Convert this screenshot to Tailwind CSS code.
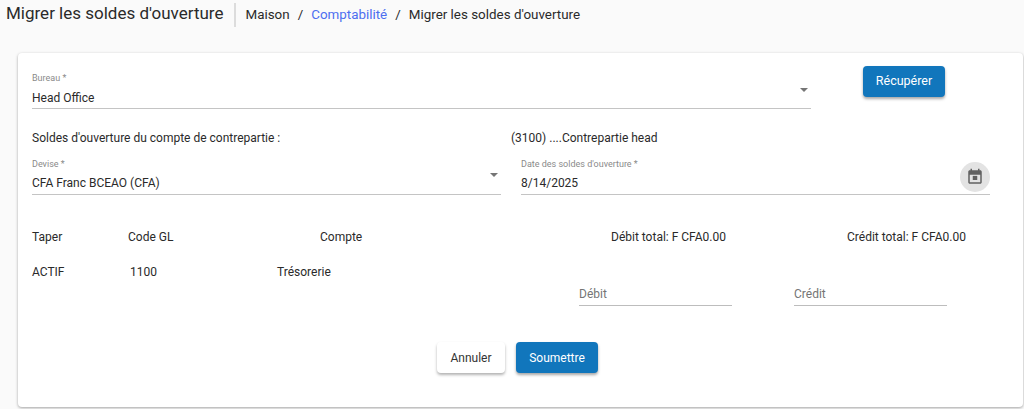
<!DOCTYPE html>
<html lang="fr">
<head>
<meta charset="utf-8">
<title>Migrer les soldes d'ouverture</title>
<script src="https://cdn.jsdelivr.net/npm/@tailwindcss/browser@4"></script>
</head>
<body class="bg-[#fafafa] font-['Roboto',sans-serif] text-[#2a2a2a] overflow-hidden">
<div class="h-[409px] w-[1024px] flex flex-col">
  <!-- header -->
  <div class="flex items-center h-[24px] mt-[3px] pl-[6px]">
    <h1 class="text-[17px] leading-[24px] font-normal mb-[4px]">Migrer les soldes d'ouverture</h1>
    <div class="w-[2px] h-[24px] bg-[#dcdcdc] ml-[11px] mr-[9px]"></div>
    <div class="flex items-center text-[13.4px] leading-[24px] gap-[8px]">
      <span>Maison</span><span>/</span><span class="text-[#4d6ef0]">Comptabilité</span><span>/</span><span>Migrer les soldes d'ouverture</span>
    </div>
  </div>

  <!-- card -->
  <div class="ml-[18px] mr-[1px] mt-[26px] h-[354px] bg-white rounded shadow-[0_1px_3px_rgba(0,0,0,0.35)] pl-[14px] relative">
    <div class="flex items-start">
      <div class="w-[779px] mt-[20px] border-b border-[#c4c4c4] h-[36px] relative">
        <div class="text-[9px] leading-[11px] text-[#8a8a8a]">Bureau *</div>
        <div class="text-[12px] leading-[16px] mt-[6px]">Head Office</div>
        <span class="absolute right-[3px] top-[15px] w-0 h-0 border-x-[4px] border-x-transparent border-t-[4px] border-t-[#757575]"></span>
      </div>
      <button class="ml-[52px] mt-[13px] w-[82px] h-[31px] rounded bg-[#1176bc] text-white text-[12.5px] shadow-[0_2px_3px_rgba(0,0,0,0.35)]">Récupérer</button>
    </div>

    <div class="flex mt-[22px] text-[12px] leading-[15px]">
      <div class="w-[479px]">Soldes d'ouverture du compte de contrepartie :</div>
      <div>(3100) ....Contrepartie head</div>
    </div>

    <div class="flex gap-[20px] mt-[13px]">
      <div class="w-[469px] h-[36px] border-b border-[#c4c4c4] relative">
        <div class="text-[9px] leading-[11px] text-[#8a8a8a]">Devise *</div>
        <div class="text-[12px] leading-[16px] mt-[5px]">CFA Franc BCEAO (CFA)</div>
        <span class="absolute right-[3px] top-[14px] w-0 h-0 border-x-[4px] border-x-transparent border-t-[4px] border-t-[#757575]"></span>
      </div>
      <div class="w-[469px] h-[36px] border-b border-[#c4c4c4] relative">
        <div class="text-[9px] leading-[11px] text-[#8a8a8a]">Date des soldes d'ouverture *</div>
        <div class="text-[12px] leading-[16px] mt-[5px]">8/14/2025</div>
        <span class="absolute right-0 top-[3px] w-[30px] h-[30px] rounded-full bg-[#e3e3e3] flex items-center justify-center">
          <svg class="w-[18px] h-[18px]" viewBox="0 0 24 24" fill="#616161"><path d="M19 3h-1V1h-2v2H8V1H6v2H5c-1.1 0-2 .9-2 2v14c0 1.1.9 2 2 2h14c1.1 0 2-.9 2-2V5c0-1.1-.9-2-2-2zm0 16H5V9h14v10z"/><path d="M9 10.5h6V16H9z"/></svg>
        </span>
      </div>
    </div>

    <!-- table head -->
    <div class="relative h-[16px] mt-[34px] text-[12px] leading-[16px]">
      <span class="absolute left-0">Taper</span>
      <span class="absolute left-[96px]">Code GL</span>
      <span class="absolute left-[288px]">Compte</span>
      <span class="absolute left-[579px]">Débit total: F CFA0.00</span>
      <span class="absolute left-[815px]">Crédit total: F CFA0.00</span>
    </div>
    <!-- table row -->
    <div class="relative h-[50px] mt-[19px] text-[12px] leading-[16px]">
      <span class="absolute left-0">ACTIF</span>
      <span class="absolute left-[98px]">1100</span>
      <span class="absolute left-[245px]">Trésorerie</span>
      <div class="absolute left-[547px] top-[15px] w-[153px] h-[27px] pt-[7px] border-b border-[#bdbdbd] text-[#757575]">Débit</div>
      <div class="absolute left-[762px] top-[15px] w-[153px] h-[27px] pt-[7px] border-b border-[#bdbdbd] text-[#757575]">Crédit</div>
    </div>

    <div class="flex justify-center gap-[11px] mt-[28px] pr-[14px] ml-[-6px]">
      <button class="w-[68px] h-[31px] rounded bg-white text-[#333] text-[12px] shadow-[0_2px_3px_rgba(0,0,0,0.3)]">Annuler</button>
      <button class="w-[82px] h-[31px] rounded bg-[#1176bc] text-white text-[12px] shadow-[0_2px_3px_rgba(0,0,0,0.35)]">Soumettre</button>
    </div>
  </div>
</div>
</body>
</html>
